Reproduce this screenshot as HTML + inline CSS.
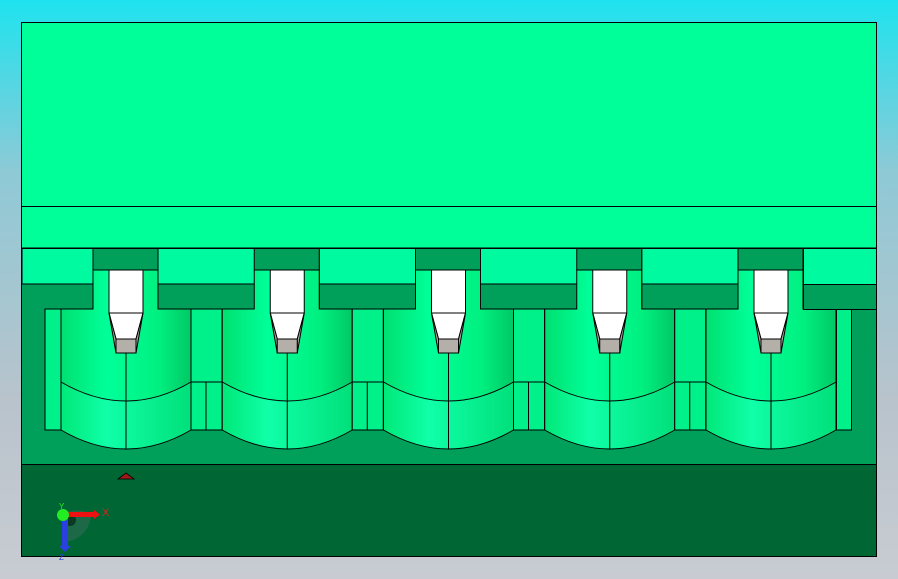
<!DOCTYPE html><html><head><style>body{margin:0;width:898px;height:579px;overflow:hidden;background:linear-gradient(180deg,#1ee3ee 0%,#8fc9d6 30%,#b9c3cc 70%,#c8ccd2 100%);font-family:"Liberation Sans",sans-serif}</style></head><body>
<svg width="898" height="579" viewBox="0 0 898 579" style="position:absolute;left:0;top:0">
<defs>
<clipPath id="cp"><rect x="22" y="22" width="854" height="534"/></clipPath>
<linearGradient id="cyl" x1="0" x2="1"><stop offset="0" stop-color="#00e070"/><stop offset=".35" stop-color="#00ff99"/><stop offset=".75" stop-color="#00f080"/><stop offset="1" stop-color="#00c865"/></linearGradient>
<linearGradient id="cyl2" x1="0" x2="1"><stop offset="0" stop-color="#00e878"/><stop offset=".35" stop-color="#10ffa8"/><stop offset="1" stop-color="#00e07a"/></linearGradient>
<g id="u" stroke="#000" stroke-width="1">
<rect x="158" y="248" width="98" height="36" fill="#00faa0"/>
<rect x="158" y="284" width="98" height="25" fill="#00a05a"/>
<rect x="93" y="248" width="65" height="22" fill="#00a05a"/>
<path d="M61 309H93V270H158V309H191V430H61Z" fill="url(#cyl)"/>
<path d="M61 382Q126 420 191 382L191 430Q126 468 61 430Z" fill="url(#cyl2)"/>
<path d="M126 353V449M191 309V430M191 382L194 430" fill="none"/>
<rect x="191" y="309" width="31" height="121" fill="#00f08a"/>
<path d="M206 382V430M191 382H222" fill="none"/>
<path d="M109 270H143V313L136 339V353H116V339L109 313Z" fill="#fff"/>
<path d="M109 313L116 339V353L109 313ZM143 313L136 339V353Z" fill="#aaa59e"/>
<rect x="116" y="339" width="20" height="14" fill="#b4afa8"/>
<path d="M109 313H143" fill="none"/>
</g>
</defs>
<rect x="21.5" y="22.5" width="855" height="534" fill="#00ff99" stroke="#000"/>
<g clip-path="url(#cp)">
<line x1="22" y1="206.5" x2="876" y2="206.5" stroke="#000"/>
<rect x="22" y="248" width="854" height="216" fill="#00a05a"/>
<rect x="22" y="248" width="71" height="36" fill="#00faa0" stroke="#000"/>
<rect x="45" y="309" width="16" height="121" fill="#00f08a" stroke="#000"/>
<use href="#u"/>
<use href="#u" x="161.25"/>
<use href="#u" x="322.5"/>
<use href="#u" x="483.75"/>
<use href="#u" x="645"/>
<rect x="836.5" y="300" width="45" height="164" fill="#00a05a"/>
<rect x="836.5" y="309" width="15" height="121" fill="#00f08a" stroke="#000"/>
<line x1="836.5" y1="309" x2="836.5" y2="430" stroke="#000"/>
<rect x="803.5" y="248.5" width="80" height="36" fill="#00faa0" stroke="#000"/>
<rect x="803.5" y="284.5" width="80" height="25" fill="#00a05a" stroke="#000"/>
<line x1="22" y1="248.5" x2="876" y2="248.5" stroke="#000"/>
</g>
<rect x="21.5" y="464.5" width="855" height="92" fill="#006633" stroke="#000"/>
<rect x="21.5" y="22.5" width="855" height="534" fill="none" stroke="#000"/>
<path d="M118 479L126 473L134 479Z" fill="#a01818" stroke="#000" stroke-width=".8"/>
<path d="M63 514A28 28 0 0 1 91 514A28 28 0 0 1 63 542Z" fill="#2a6a50" opacity=".7"/>
<circle cx="70" cy="520" r="6" fill="#0a3a22"/>
<rect x="62" y="514" width="6" height="32" fill="#2a40e0"/>
<path d="M59 546H71L65 552Z" fill="#2a40e0"/>
<rect x="64" y="512" width="30" height="5" fill="#ee1111"/>
<path d="M94 510V519L100 514.5Z" fill="#ee1111"/>
<circle cx="63" cy="515" r="6" fill="#22ee22"/>
<text x="102" y="516" font-size="11" fill="#dd2222">X</text>
<text x="59" y="509" font-size="8" fill="#22ee22">Y</text>
<text x="59" y="560" font-size="8" fill="#2a40e0">Z</text>
</svg>
</body></html>
